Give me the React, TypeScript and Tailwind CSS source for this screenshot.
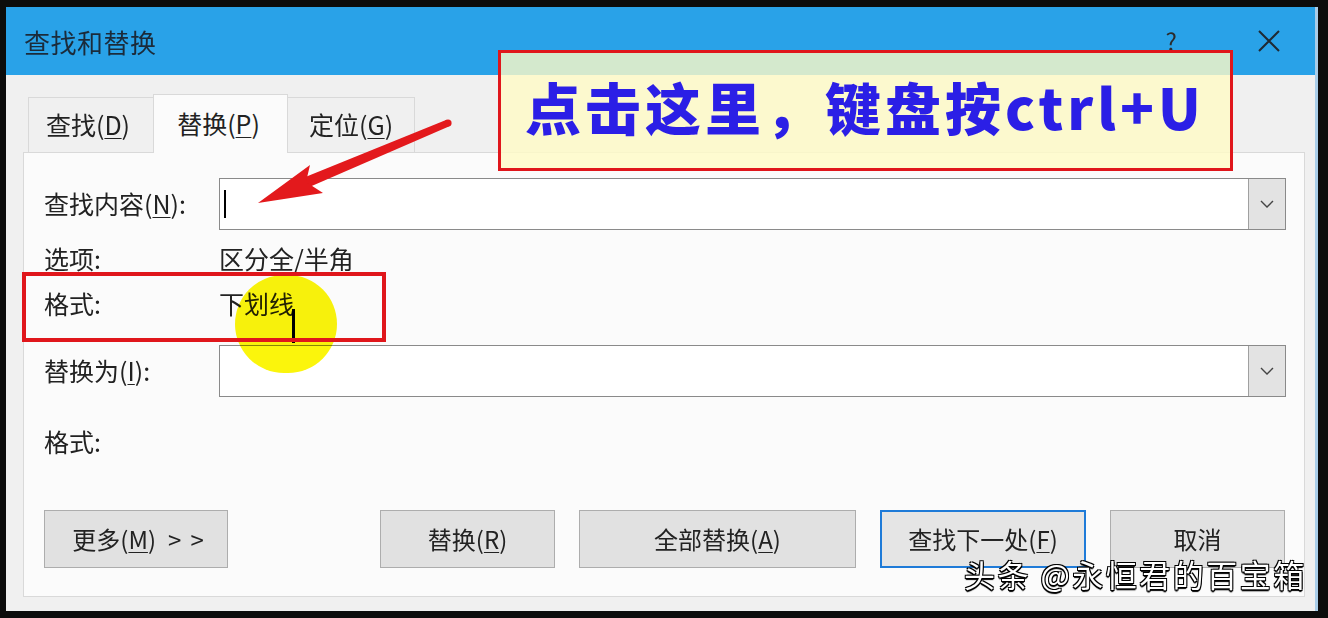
import React from 'react';

const font = "font-['Noto_Sans_CJK_SC','Noto_Sans',sans-serif]";

const Acc: React.FC<{ k: string }> = ({ k }) => (
    <>
        (<span className="underline underline-offset-[3px] decoration-1">{k}</span>)
    </>
);

const Chevron: React.FC = () => (
    <svg width="16" height="10" viewBox="0 0 16 10" fill="none" stroke="#444" strokeWidth="1.4">
        <path d="M2 2l6 6 6-6" />
    </svg>
);

const Combo: React.FC<{ caret?: boolean }> = ({ caret }) => (
    <div className="flex-1 flex h-[52px] bg-white border border-[#8a8a8a]">
        <div className="flex-1 flex items-center pl-[4px]">
            {caret && <div className="w-[2px] h-[28px] bg-black" />}
        </div>
        <div className="w-[37px] flex items-center justify-center bg-[#e3e3e3] border-l border-[#a0a0a0]">
            <Chevron />
        </div>
    </div>
);

const Btn: React.FC<{ w: string; primary?: boolean; children: React.ReactNode }> = ({ w, primary, children }) => (
    <div
        className={
            primary
                ? `${w} h-[58px] flex items-center justify-center bg-[#e5e5e5] border-2 border-[#1f7bd8] text-[24px] text-[#222]`
                : `${w} h-[58px] flex items-center justify-center bg-[#e1e1e1] border border-[#adadad] text-[24px] text-[#222]`
        }
    >
        {children}
    </div>
);

const App: React.FC = () => {
    return (
        <div className={`relative w-[1328px] h-[618px] bg-[#0c0c0c] pt-[7px] pl-[6px] pr-[10px] pb-[7px] ${font}`}>
            <div className="w-full h-full flex flex-col border-r-[3px] border-[#a9cde9]">
                {/* Title bar */}
                <div className="h-[68px] bg-[#29a2e8] flex items-center pl-[18px] pr-[34px]">
                    <span className="text-[26px] text-[#1b2b3a] tracking-[0.5px]">查找和替换</span>
                    <span className="ml-auto mr-[80px] text-[24px] text-[#2b2b2b]">?</span>
                    <svg width="24" height="24" viewBox="0 0 24 24" stroke="#1f2a33" strokeWidth="2">
                        <path d="M2 2l20 20M22 2L2 22" />
                    </svg>
                </div>

                {/* Body */}
                <div className="flex-1 bg-[#f0f0f0] flex flex-col pt-[18px] pl-[17px] pr-[10px] pb-[14px]">
                    <div className="flex items-end h-[59px] pl-[5px]">
                        <div className="w-[125px] h-[55px] flex items-center justify-center pr-[6px] border-t border-l border-[#d9d9d9] text-[25px] text-[#222]">
                            查找<Acc k="D" />
                        </div>
                        <div className="w-[135px] h-[59px] -mb-px z-10 flex items-center justify-center pr-[4px] bg-[#fbfbfb] border border-b-0 border-[#d9d9d9] text-[25px] text-[#222]">
                            替换<Acc k="P" />
                        </div>
                        <div className="w-[127px] h-[55px] flex items-center justify-center border-t border-r border-[#d9d9d9] text-[25px] text-[#222]">
                            定位<Acc k="G" />
                        </div>
                    </div>

                    {/* Panel */}
                    <div className="flex-1 bg-[#fbfbfb] border border-[#d9d9d9] pt-[25px] pl-[20px] pr-[18px] flex flex-col text-[25px] text-[#222]">
                        <div className="flex items-center">
                            <div className="w-[175px]">查找内容<Acc k="N" />:</div>
                            <Combo caret />
                        </div>
                        <div className="flex items-center h-[45px] mt-[6px]">
                            <div className="w-[175px]">选项:</div>
                            <div>区分全/半角</div>
                        </div>
                        <div className="flex items-center h-[45px]">
                            <div className="w-[175px]">格式:</div>
                            <div>下划线</div>
                        </div>
                        <div className="flex items-center mt-[19px]">
                            <div className="w-[175px]">替换为<Acc k="I" />:</div>
                            <Combo />
                        </div>
                        <div className="flex items-center h-[44px] mt-[23px]">
                            <div className="w-[175px]">格式:</div>
                        </div>
                        <div className="flex items-center mt-[46px]">
                            <Btn w="w-[184px]">
                                <span className="pl-[4px]">
                                    更多<Acc k="M" /><span className="ml-[12px]">&gt;</span><span className="ml-[9px]">&gt;</span>
                                </span>
                            </Btn>
                            <div className="ml-auto flex gap-[24px] mr-px">
                                <Btn w="w-[175px]">
                                    替换<Acc k="R" />
                                </Btn>
                                <Btn w="w-[277px]">
                                    全部替换<Acc k="A" />
                                </Btn>
                                <Btn w="w-[206px]" primary>
                                    查找下一处<Acc k="F" />
                                </Btn>
                                <Btn w="w-[175px]">取消</Btn>
                            </div>
                        </div>
                    </div>
                </div>
            </div>

            {/* Annotations */}
            <div className="absolute left-[235px] top-[275px] w-[102px] h-[98px] rounded-full bg-[#fbf50c] mix-blend-multiply" />
            <div className="absolute left-[292px] top-[309px] w-[3px] h-[34px] bg-black" />
            <div className="absolute left-[22px] top-[272px] w-[364px] h-[70px] border-[4px] border-[#e0161b]" />

            <div className="absolute left-[498px] top-[50px] w-[735px] h-[121px] border-[3px] border-[#e0161b] bg-[#fffbc6]/80 flex items-center pl-[24px] pb-[10px]">
                <span className="text-[56px] font-black text-[#2b1fe6] leading-none tracking-[4px]">
                    点击这里，键盘按ctrl+U
                </span>
            </div>

            <svg className="absolute left-0 top-0" width="1328" height="618" viewBox="0 0 1328 618">
                <path d="M449.4 126.2 L307.1 188.1 L302.9 177.9 L446.6 119.8 Z" fill="#e3191c" />
                <circle cx="448" cy="123" r="3.6" fill="#e3191c" />
                <path d="M258 203 L310 165 L306 182 L323 193 Z" fill="#e3191c" />
            </svg>

            <div className="absolute left-[964px] top-[558px] text-[31px] text-white leading-none tracking-[2.5px] [text-shadow:1px_1px_0_#000,-1px_-1px_0_#000,1px_-1px_0_#000,-1px_1px_0_#000,0_2px_1px_#000]">
                头条 @永恒君的百宝箱
            </div>
        </div>
    );
};

export default App;
